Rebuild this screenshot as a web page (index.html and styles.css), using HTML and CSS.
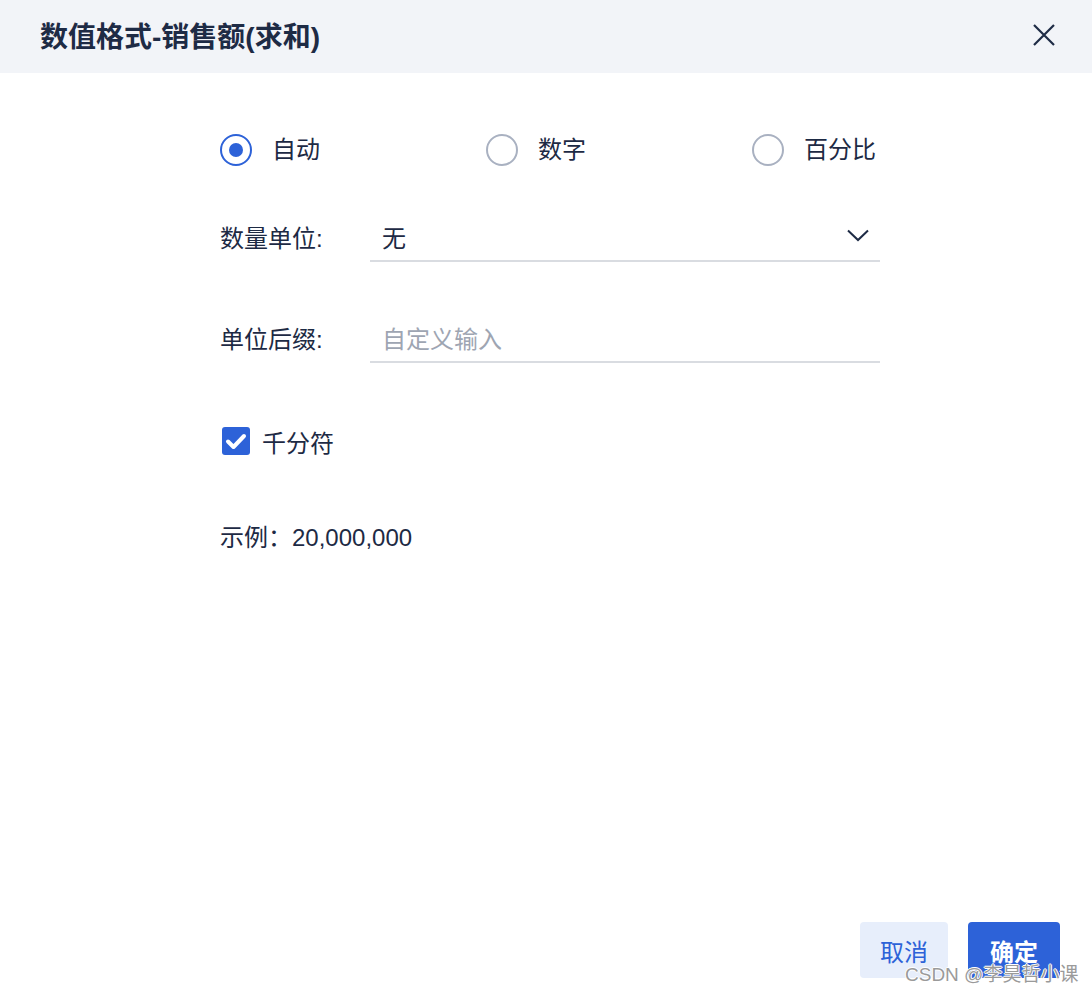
FILE: index.html
```html
<!DOCTYPE html>
<html lang="zh-CN">
<head>
<meta charset="utf-8">
<title>数值格式</title>
<link rel="stylesheet" href="styles.css">
</head>
<body>
<div class="dialog">
  <div class="header">
    <div class="title">数值格式-销售额(求和)</div>
    <svg class="close" width="22" height="22" viewBox="0 0 22 22"><path d="M1 1L21 21M21 1L1 21" stroke="#1e2b45" stroke-width="2.2" fill="none"/></svg>
  </div>
  <div class="content">
    <div class="radios">
      <div class="radio-item"><span class="radio checked"></span><span>自动</span></div>
      <div class="radio-item"><span class="radio"></span><span>数字</span></div>
      <div class="radio-item"><span class="radio"></span><span>百分比</span></div>
    </div>
    <div class="field field-unit">
      <div class="label">数量单位:</div>
      <div class="control">
        <span class="value">无</span>
        <svg class="chevron" width="22" height="13" viewBox="0 0 22 13"><path d="M1 1.5L11 11L21 1.5" stroke="#1e2b45" stroke-width="2" fill="none"/></svg>
      </div>
    </div>
    <div class="field field-suffix">
      <div class="label">单位后缀:</div>
      <div class="control"><span class="placeholder">自定义输入</span></div>
    </div>
    <div class="check-row">
      <span class="checkbox"><svg width="28" height="28" viewBox="0 0 28 28"><path d="M6 14.5L11.5 20L22 9" stroke="#fff" stroke-width="4" fill="none" stroke-linecap="round" stroke-linejoin="round"/></svg></span>
      <span>千分符</span>
    </div>
    <div class="example">示例：20,000,000</div>
  </div>
  <div class="footer">
    <button class="btn btn-cancel">取消</button>
    <button class="btn btn-ok">确定</button>
  </div>
  <div class="watermark">CSDN @李昊哲小课</div>
</div>
</body>
</html>
```
FILE: styles.css
```css
* { box-sizing: border-box; }
html, body { margin: 0; padding: 0; background: #fff; }
body {
  font-family: "Liberation Sans", "Noto Sans CJK SC", sans-serif;
  color: #1d2a44;
}
.dialog {
  position: relative;
  width: 1092px;
  height: 993px;
  display: flex;
  flex-direction: column;
  background: #fff;
}
.header {
  height: 73px;
  flex: none;
  background: #f2f4f8;
  display: flex;
  align-items: center;
  justify-content: space-between;
  padding: 0 37px 4px 40px;
}
.title {
  font-size: 28px;
  font-weight: bold;
  color: #1e2b45;
}
.close { display: block; }
.content {
  flex: 1;
  padding: 61px 0 0 220px;
  font-size: 24px;
}
.radios {
  width: 656px;
  display: flex;
  justify-content: space-between;
  align-items: center;
  height: 32px;
}
.radio-item {
  display: flex;
  align-items: center;
  gap: 20px;
  line-height: 32px;
}
.radio {
  width: 32px;
  height: 32px;
  border-radius: 50%;
  border: 2px solid #a9b1c1;
  display: flex;
  align-items: center;
  justify-content: center;
}
.radio.checked { border-color: #2d62d8; }
.radio.checked::after {
  content: "";
  width: 14px;
  height: 14px;
  border-radius: 50%;
  background: #2d62d8;
}
.field {
  display: flex;
  align-items: stretch;
  width: 660px;
  height: 46px;
}
.field-unit { margin-top: 50px; }
.field-suffix { margin-top: 55px; }
.label {
  width: 150px;
  flex: none;
  line-height: 46px;
}
.control {
  flex: 1;
  display: flex;
  align-items: center;
  justify-content: space-between;
  padding: 0 11px 4px 12px;
  border-bottom: 2px solid #d9dce1;
}
.placeholder { color: #9ea5b2; }
.chevron { display: block; margin-top: -2px; }
.check-row {
  margin-top: 64px;
  margin-left: 2px;
  display: flex;
  align-items: center;
  gap: 12px;
  height: 28px;
}
.checkbox {
  width: 28px;
  height: 28px;
  border-radius: 3px;
  background: #2d62d8;
  display: block;
}
.checkbox svg { display: block; }
.example {
  margin-top: 69px;
  line-height: 28px;
}
.footer {
  flex: none;
  display: flex;
  justify-content: flex-end;
  gap: 20px;
  padding: 0 32px 15px 0;
}
.btn {
  height: 56px;
  border: none;
  border-radius: 4px;
  font-family: "Liberation Sans", "Noto Sans CJK SC", sans-serif;
  font-size: 24px;
  padding: 0 20px;
}
.btn-cancel { background: #e7eefb; color: #2d62d8; width: 88px; }
.btn-ok { background: #2d62d8; color: #fff; font-weight: bold; width: 92px; }
.watermark {
  position: absolute;
  left: 905px;
  top: 959px;
  font-size: 19px;
  color: #9a9a9a;
  text-shadow: 1px 0 0 #fff, -1px 0 0 #fff, 0 1px 0 #fff, 0 -1px 0 #fff;
  white-space: nowrap;
}
```
